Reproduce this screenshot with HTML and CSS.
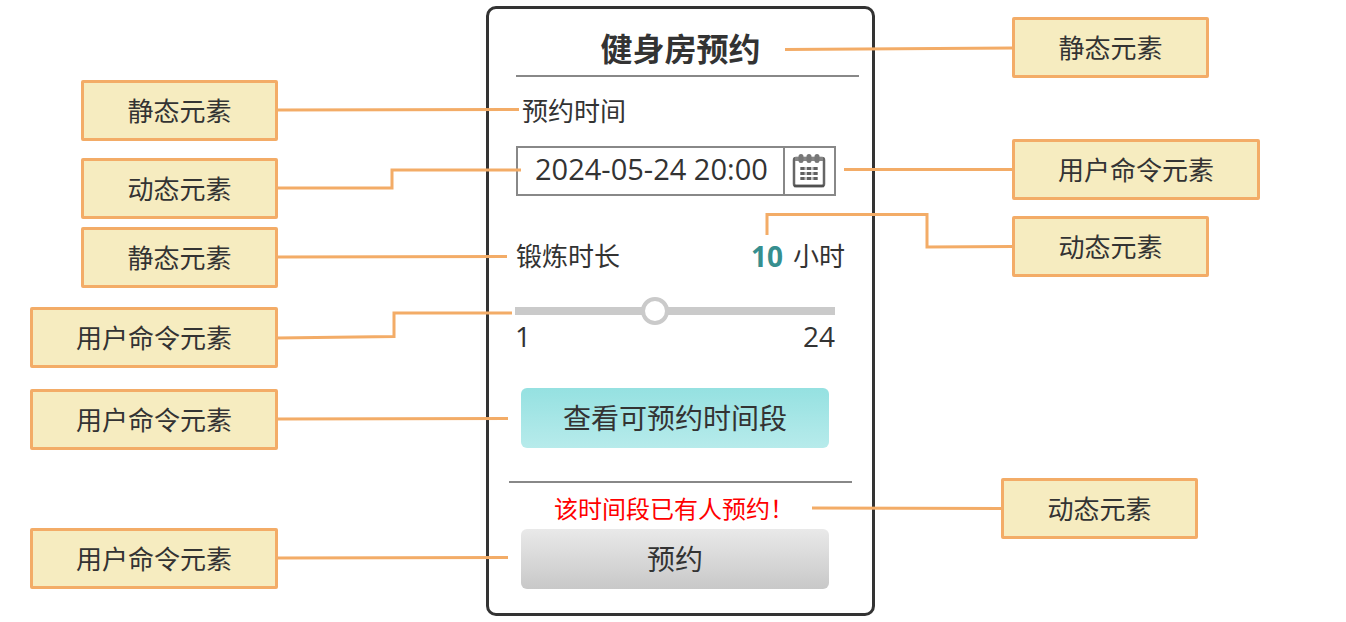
FILE: index.html
```
<!DOCTYPE html>
<html lang="zh-CN">
<head>
<meta charset="utf-8">
<meta name="viewport" content="width=device-width, initial-scale=1">
<title>健身房预约</title>
<link rel="stylesheet" href="styles.css">
</head>
<body>
<main class="board">
  <div class="stage">
    <form class="phone">
      <h1 class="title">健身房预约</h1>
      <hr class="rule rule-top">
      <label class="label label-time" for="time">预约时间</label>
      <div class="date-field">
        <input class="date-input" id="time" type="text" value="2024-05-24 20:00">
        <button class="date-button" type="button" aria-label="选择日期">
          <svg class="calendar" viewBox="0 0 34 34" aria-hidden="true">
            <rect x="2" y="4" width="30" height="28" rx="2" fill="#fff" stroke="#666" stroke-width="2.500"/>
            <path d="M2 32H32" stroke="#505050" stroke-width="2.500"/>
            <path d="M3 5H31" stroke="#858585" stroke-width="4"/>
            <path d="M9 2.500V6.500M17 2.500V6.500M25 2.500V6.500" stroke="#777" stroke-width="5" stroke-linecap="round"/>
            <path d="M8 14.500H26M8 19.500H26M8 24.500H26" stroke="#c4c4c4" stroke-width="3"/>
            <path d="M8.500 14.500H12.500M15 14.500H19M21.500 14.500H25.500M8.500 19.500H12.500M15 19.500H19M21.500 19.500H25.500M8.500 24.500H12.500M15 24.500H19M21.500 24.500H25.500" stroke="#606060" stroke-width="3"/>
          </svg>
        </button>
      </div>
      <div class="duration">
        <label class="label" for="hours">锻炼时长</label>
        <output class="hours" for="hours"><b class="hours-value">10</b><span>小时</span></output>
      </div>
      <input class="slider" id="hours" type="range" min="1" max="24" step="0.1" value="10.9">
      <div class="scale"><span>1</span><span>24</span></div>
      <button class="button button-check" type="button">查看可预约时间段</button>
      <hr class="rule">
      <p class="warning">该时间段已有人预约！</p>
      <button class="button button-book" type="submit">预约</button>
    </form>

    <div class="notes">
      <svg class="links" viewBox="0 0 1346 622" aria-hidden="true">
        <polyline points="277,110 519,109.500"/>
        <polyline points="277,188 392,188 392,170 521,170"/>
        <polyline points="277,257 507,256.500"/>
        <polyline points="277,338 394,336.500 394,313 512,313"/>
        <polyline points="277,419 508,418.500"/>
        <polyline points="277,558 508,557.500"/>
        <polyline points="785,49.500 1013,48"/>
        <polyline points="844,169.500 1013,169.500"/>
        <polyline points="767,235 767,214.500 927,214.500 927,247 1013,246.500"/>
        <polyline points="812,508 1002,508.500"/>
      </svg>
      <div class="note note-l1">静态元素</div>
      <div class="note note-l2">动态元素</div>
      <div class="note note-l3">静态元素</div>
      <div class="note note-l4 note-wide">用户命令元素</div>
      <div class="note note-l5 note-wide">用户命令元素</div>
      <div class="note note-l6 note-wide">用户命令元素</div>
      <div class="note note-r1">静态元素</div>
      <div class="note note-r2 note-wide">用户命令元素</div>
      <div class="note note-r3">动态元素</div>
      <div class="note note-r4">动态元素</div>
    </div>
  </div>
</main>
</body>
</html>
```
FILE: styles.css
```
* {
  box-sizing: border-box;
}

body {
  margin: 0;
  background: #fff;
  color: #333;
  font-family: "Open Sans", "Noto Sans CJK SC", sans-serif;
  font-size: 26px;
  line-height: 32px;
}

button,
input {
  font: inherit;
  color: inherit;
}

/* The phone is centred; the notes hang around it */
.board {
  display: flex;
  justify-content: center;
  padding: 6px 0 6px 15px;
}

.stage {
  position: relative;
}

.phone {
  display: flex;
  flex-direction: column;
  width: 389px;
  padding: 16px 20px 24px;
  border: 3px solid #333;
  border-radius: 10px;
}

.title {
  margin: 0;
  font-size: 32px;
  line-height: 48px;
  text-align: center;
}

.rule {
  width: 343px;
  height: 2px;
  margin: 0;
  border: 0;
  background: #888;
}

.rule-top {
  margin: 2px 0 18px 7px;
}

.label-time {
  margin-left: 13px;
}

.date-field {
  display: flex;
  width: 320px;
  height: 50px;
  margin: 19px 0 44px 7px;
  border: 2px solid #888;
}

.date-input {
  flex: 1;
  min-width: 0;
  padding: 0 0 4px 17px;
  border: 0;
  outline: 0;
  background: transparent;
  font-size: 29px;
}

.date-button {
  display: flex;
  align-items: center;
  justify-content: center;
  width: 51px;
  padding: 0 2px 0 0;
  border: 0;
  border-left: 2px solid #888;
  background: #fff;
}

.calendar {
  width: 34px;
  height: 34px;
}

.duration {
  display: flex;
  justify-content: space-between;
  margin: 0 7px;
}

.hours {
  display: flex;
  gap: 10px;
}

.hours-value {
  color: #368f8f;
  font-size: 28px;
}

.slider {
  appearance: none;
  width: 320px;
  height: 28px;
  margin: 25px 0 0 6px;
  background: linear-gradient(#cacaca, #cacaca) center / 100% 8px no-repeat;
}

.slider::-webkit-slider-thumb {
  appearance: none;
  width: 28px;
  height: 28px;
  border: 4px solid #cacaca;
  border-radius: 50%;
  background: #fff;
}

.scale {
  display: flex;
  justify-content: space-between;
  width: 320px;
  margin: -5px 0 36px 6px;
  font-size: 28px;
}

.button {
  width: 308px;
  height: 60px;
  margin-left: 12px;
  padding: 0;
  border: 0;
  border-radius: 6px;
  font-size: 28px;
}

.button-check {
  margin-bottom: 33px;
  background: linear-gradient(#95e1e1, #b7ebeb);
}

.button-book {
  background: linear-gradient(#e9e9e9, #c8c8c8);
}

.warning {
  margin: 10px 0 4px 45px;
  color: #f00;
  font-size: 24px;
}

/* Free canvas over the phone */
.notes {
  position: absolute;
  top: -6px;
  left: -486px;
  width: 1346px;
  pointer-events: none;
}

.links {
  display: block;
  width: 100%;
  fill: none;
  stroke: #f3ac67;
  stroke-width: 3px;
}

.note {
  position: absolute;
  display: flex;
  align-items: center;
  justify-content: center;
  width: 197px;
  height: 61px;
  border: 3px solid #f3ac67;
  border-radius: 2px;
  background: #f6ecc0;
}

.note-wide {
  width: 248px;
}

.note-l1 { left: 81px; top: 80px; }
.note-l2 { left: 81px; top: 158px; }
.note-l3 { left: 81px; top: 227px; }
.note-l4 { left: 30px; top: 307px; }
.note-l5 { left: 30px; top: 389px; }
.note-l6 { left: 30px; top: 528px; }
.note-r1 { left: 1012px; top: 17px; }
.note-r2 { left: 1012px; top: 139px; }
.note-r3 { left: 1012px; top: 216px; }
.note-r4 { left: 1001px; top: 478px; }
```
